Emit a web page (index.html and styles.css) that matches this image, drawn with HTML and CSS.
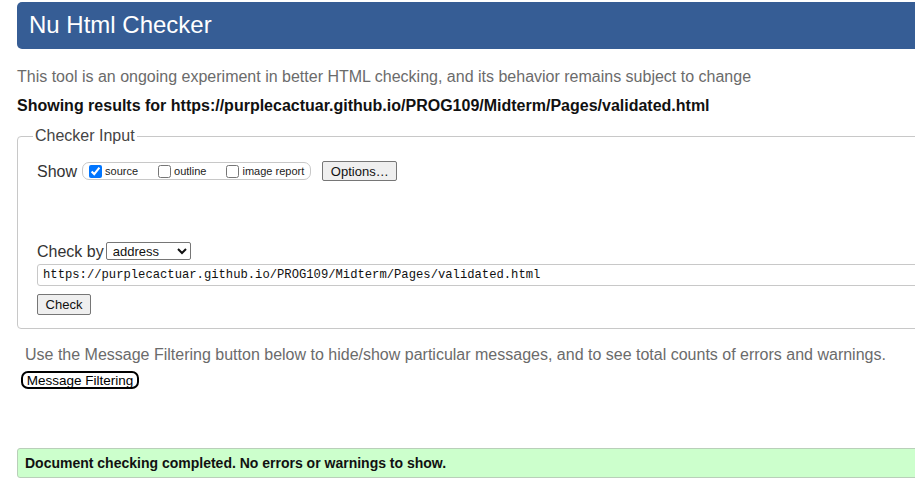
FILE: index.html
```html
<!DOCTYPE html>
<html lang="en">
<head>
<meta charset="utf-8">
<title>Showing results for https://purplecactuar.github.io/PROG109/Midterm/Pages/validated.html - Nu Html Checker</title>
<link rel="stylesheet" href="styles.css">
</head>
<body>
<div class="page">
  <header class="topbar"><h1 class="title">Nu Html Checker</h1></header>
  <p class="desc">This tool is an ongoing experiment in better HTML checking, and its behavior remains subject to change</p>
  <p class="showing">Showing results for https://purplecactuar.github.io/PROG109/Midterm/Pages/validated.html</p>
  <fieldset class="input-box">
    <legend class="legend">Checker Input</legend>
    <div class="show-row">
      <span class="lbl">Show</span>
      <div class="pill">
        <label class="opt opt-source"><input type="checkbox" checked>source</label>
        <label class="opt opt-outline"><input type="checkbox">outline</label>
        <label class="opt"><input type="checkbox">image report</label>
      </div>
      <button class="btn btn-options" type="button">Options…</button>
    </div>
    <div class="checkby-row">
      <span class="lbl">Check by</span>
      <select class="sel"><option>address</option></select>
    </div>
    <input class="url" type="text" value="https://purplecactuar.github.io/PROG109/Midterm/Pages/validated.html">
    <div class="check-row"><button class="btn btn-check" type="button">Check</button></div>
  </fieldset>
  <p class="filter-note">Use the Message Filtering button below to hide/show particular messages, and to see total counts of errors and warnings.</p>
  <button class="filter-btn" type="button">Message Filtering</button>
  <div class="success">Document checking completed. No errors or warnings to show.</div>
</div>
</body>
</html>
```

FILE: styles.css
```css
html, body {
  margin: 0;
  padding: 0;
  background: #fff;
  overflow: hidden;
}
body {
  font-family: "Liberation Sans", Arial, sans-serif;
  color: #222;
}
.page {
  width: 1000px;
  padding: 2px 0 0 17px;
}
.topbar {
  height: 47px;
  background: #365d95;
  border-radius: 5px 0 0 5px;
}
.title {
  margin: 0;
  padding-left: 12px;
  font-size: 24px;
  font-weight: normal;
  line-height: 46px;
  color: #fff;
}
.desc {
  margin: 18px 0 0;
  font-size: 16px;
  line-height: 19px;
  color: #6b6b6b;
}
.showing {
  margin: 10px 0 0;
  font-size: 16px;
  line-height: 19px;
  font-weight: bold;
  color: #111;
}
.input-box {
  margin: 12px 0 0;
  padding: 0 19px 13px;
  border: 1px solid #c8c8c8;
  border-radius: 4px;
}
.legend {
  margin-left: -4px;
  padding: 0 2px;
  font-size: 16px;
  line-height: 18px;
  color: #444;
}
.show-row {
  display: flex;
  align-items: center;
  height: 20px;
  margin-top: 16px;
}
.lbl {
  font-size: 16px;
  line-height: 19px;
  color: #333;
}
.pill {
  display: flex;
  align-items: center;
  height: 16px;
  margin-left: 5px;
  padding: 0 6px 0 6px;
  border: 1px solid #c8c8c8;
  border-radius: 7px;
}
.opt {
  display: flex;
  align-items: center;
  font-size: 11px;
  color: #222;
}
.opt input {
  width: 13px;
  height: 13px;
  margin: 0 3px 0 0;
}
.opt-source { margin-right: 20px; }
.opt-outline { margin-right: 20px; }
.btn {
  font-family: "Liberation Sans", Arial, sans-serif;
  font-size: 13px;
  color: #111;
  background: #efefef;
  border: 1px solid #767676;
  border-radius: 2px;
  padding: 0 6px;
}
.btn-options {
  margin-left: 11px;
  height: 20px;
  width: 75px;
}
.checkby-row {
  display: flex;
  align-items: center;
  height: 20px;
  margin-top: 60px;
}
.sel {
  margin-left: 2px;
  width: 85px;
  height: 18px;
  font-family: "Liberation Sans", Arial, sans-serif;
  font-size: 13px;
  padding: 0 2px;
  border: 1px solid #767676;
  border-radius: 2px;
  background: #fff;
  color: #111;
}
.url {
  display: block;
  box-sizing: border-box;
  width: 100%;
  height: 22px;
  margin-top: 3px;
  padding: 0 5px;
  border: 1px solid #c8c8c8;
  border-radius: 3px;
  font-family: "Liberation Mono", "DejaVu Sans Mono", monospace;
  font-size: 12.2px;
  color: #111;
}
.check-row {
  margin-top: 8px;
  display: flex;
}
.btn-check {
  height: 21px;
  width: 54px;
  font-size: 13px;
}
.filter-note {
  margin: 16px 0 0 8px;
  font-size: 16px;
  line-height: 19px;
  color: #6b6b6b;
}
.filter-btn {
  display: block;
  margin: 7px 0 0 4px;
  width: 118px;
  height: 18px;
  padding: 0;
  font-family: "Liberation Sans", Arial, sans-serif;
  font-size: 13.5px;
  color: #000;
  background: #fff;
  border: 2px solid #000;
  border-radius: 7px;
}
.success {
  box-sizing: border-box;
  margin-top: 59px;
  height: 30px;
  padding-left: 7px;
  display: flex;
  align-items: center;
  background: #ccffcc;
  border: 1px solid #b9cfb9;
  border-radius: 3px 0 0 3px;
  font-size: 14px;
  font-weight: bold;
  color: #111;
}
```
